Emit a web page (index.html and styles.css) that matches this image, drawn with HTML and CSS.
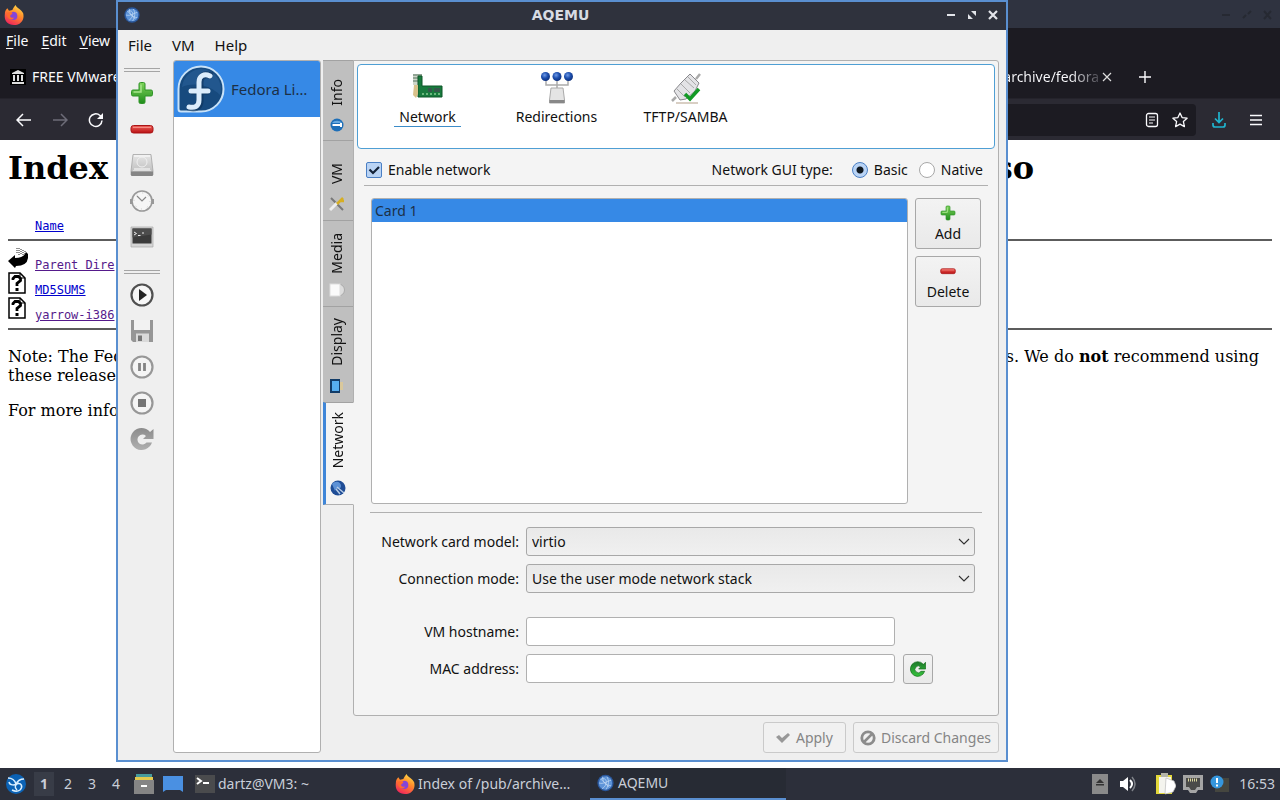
FILE: index.html
```html
<!DOCTYPE html>
<html lang="en">
<head>
<meta charset="utf-8">
<title>AQEMU</title>
<link rel="stylesheet" href="styles.css">
</head>
<body>
<svg class="defs" aria-hidden="true">
  <defs>
    <linearGradient id="green" x1="0" y1="0" x2="0" y2="1"><stop offset="0" stop-color="#7fd35a"/><stop offset="1" stop-color="#1f8d1c"/></linearGradient>
    <linearGradient id="leaf" x1="0" y1="0" x2="0" y2="1"><stop offset="0" stop-color="#1d7a2a"/><stop offset="1" stop-color="#35c33c"/></linearGradient>
    <linearGradient id="red" x1="0" y1="0" x2="0" y2="1"><stop offset="0" stop-color="#f0645c"/><stop offset="1" stop-color="#b90f12"/></linearGradient>
    <linearGradient id="grey" x1="0" y1="0" x2="0" y2="1"><stop offset="0" stop-color="#e6e6e6"/><stop offset="1" stop-color="#b8b8b8"/></linearGradient>
    <linearGradient id="dim" x1="0" y1="0" x2="0" y2="1"><stop offset="0" stop-color="#8c8c8c"/><stop offset="1" stop-color="#b0b0b0"/></linearGradient>
    <linearGradient id="fire" x1="0.8" y1="0" x2="0.3" y2="1"><stop offset="0" stop-color="#ffe14a"/><stop offset=".45" stop-color="#ff8a2a"/><stop offset="1" stop-color="#f0245c"/></linearGradient>
    <radialGradient id="ball" cx=".4" cy=".35" r=".7"><stop offset="0" stop-color="#6f9ae6"/><stop offset=".5" stop-color="#1d4fae"/><stop offset="1" stop-color="#0c2d78"/></radialGradient>
    <symbol id="i-plus" viewBox="0 0 24 24"><path d="M9 3q0-1.500 1.500-1.500h3q1.500 0 1.500 1.500V9h6q1.500 0 1.500 1.500v3q0 1.500-1.500 1.500h-6v6q0 1.500-1.500 1.500h-3Q9 22.500 9 21v-6H3q-1.500 0-1.500-1.500v-3Q1.500 9 3 9h6z" fill="url(#green)" stroke="#2f9427"/><path d="M11 3.500V11H3.500" fill="none" stroke="#a6e58c" stroke-width="1.500"/></symbol>
    <symbol id="i-minus" viewBox="0 0 24 24"><rect x="1" y="8.500" width="22" height="7.500" rx="2.500" fill="url(#red)" stroke="#a91517"/><path d="M3 10.500h18" stroke="#f48a83"/></symbol>
    <symbol id="i-disk" viewBox="0 0 24 24"><path d="M3 1.500h18l2 16.500v4H1v-4z" fill="url(#grey)" stroke="#a5a5a5" stroke-width=".8"/><path d="M1 18.500h22V22q0 1-1 1H2q-1 0-1-1z" fill="#858585"/><path d="M4 3h16M4 16h16" stroke="#fff"/><circle cx="12" cy="9" r="5" fill="none" stroke="#f0f0f0"/><path d="M3 17.500h18" stroke="#ddd"/></symbol>
    <symbol id="i-clock" viewBox="0 0 24 24"><path d="M1 10v5M23 10v5" stroke="#999" stroke-width="2"/><circle cx="12" cy="12" r="10" fill="#f6f6f6" stroke="#999" stroke-width="1.600"/><path d="M7 7l5 5 4-4" fill="none" stroke="#888" stroke-width="1.200"/><circle cx="12" cy="12" r="8" fill="none" stroke="#c6c6c6" stroke-dasharray="1 5.280"/></symbol>
    <symbol id="i-term" viewBox="0 0 24 24"><path d="M1 2h22v20H1z" fill="#d4d4d4" stroke="#aaa" stroke-width=".7"/><path d="M2.500 3.500h19v15h-19z" fill="#3b3b3b"/><path d="M2.500 3.500h19v6l-19 3z" fill="#4d4d4d"/><path d="M4 7l2.500 1.500L4 10M8 10.500h2.500M12 8h2" fill="none" stroke="#eee" stroke-width="1"/></symbol>
    <symbol id="i-play" viewBox="0 0 24 24"><circle cx="12" cy="12" r="10.500" fill="#f7f7f7" stroke="#505050" stroke-width="2.200"/><path d="M9 6l8 6-8 6z" fill="#222"/></symbol>
    <symbol id="i-save" viewBox="0 0 24 24"><path d="M1 1h22v22H3l-2-2z" fill="#969696"/><path d="M4 1h16v10H4z" fill="#f2f2f2"/><path d="M6 14.500h13V23H6z" fill="#dadada"/><path d="M8 16.500h4V22H8z" fill="#777"/></symbol>
    <symbol id="i-pause" viewBox="0 0 24 24"><circle cx="12" cy="12" r="10.500" fill="#f5f5f5" stroke="#979797" stroke-width="2.200"/><path d="M9.500 8v8M14.500 8v8" stroke="#858585" stroke-width="2.800"/></symbol>
    <symbol id="i-stop" viewBox="0 0 24 24"><circle cx="12" cy="12" r="10.500" fill="#f5f5f5" stroke="#979797" stroke-width="2.200"/><path d="M8 8h8v8H8z" fill="#757575"/></symbol>
    <symbol id="i-reload" viewBox="0 0 24 24"><path d="M20 5l3.500-3v10H13l3-3a5 5 0 1 0 .500 6.500H22A11 11 0 1 1 20 5z"/></symbol>
    <symbol id="i-aqemu" viewBox="0 0 24 24"><circle cx="12" cy="12" r="11.500" fill="#2a579b"/><circle cx="12" cy="12" r="9.500" fill="#5e94d8"/><path d="M5 7c5-3 9 0 8 5s-4 7-6 8M8 3c0 8 4 12 12 13M3 12c6 2 10-2 17-4M14 3c3 5 3 11-1 18M6 7l11 11" fill="none" stroke="#c5dcf5" stroke-width="1"/></symbol>
    <symbol id="i-firefox" viewBox="0 0 24 24"><path d="M14 0c1 4 7 5 9 10 2 8-3 14-11 14S0 19 1 11c0-3 1-5 3-7l2 3 4-1c1-2 2-4 4-6z" fill="url(#fire)"/><path d="M9 9c3-2 7 0 7 4s-2 5-5 5-5-2-4-5z" fill="#8445d8"/><path d="M3 9c2 0 3-1 6 0 2 1 1 2-1 3-2 2 1 4 4 3-1 4-9 3-9-6z" fill="#ff6a2c"/></symbol>
    <symbol id="i-unknown" viewBox="0 0 20 22"><path d="M1 1h11l5 5v15H1z" fill="#fff" stroke="#000" stroke-width="1.500"/><path d="M12 1v5h5" fill="none" stroke="#000"/><path d="M5 8V6.500l2-2h3.500l2 2v2L9 11.500V14M7.500 17.500h3" fill="none" stroke="#000" stroke-width="2.800"/></symbol>
  </defs>
</svg>

<div class="desktop">
  <section class="browser" aria-label="Firefox">
    <div class="browser-title">
      <svg width="20" height="20"><use href="#i-firefox"/></svg>
      <svg class="faded-controls" width="54" height="12" viewBox="0 0 54 12"><path d="M2 6h8M23 9l3-3M28 5l3-3M44 2l7 8M51 2l-7 8" fill="none" stroke="#262932" stroke-width="2"/></svg>
    </div>
    <nav class="browser-menu"><a href="#"><u>F</u>ile</a><a href="#"><u>E</u>dit</a><a href="#"><u>V</u>iew</a></nav>
    <div class="browser-tabs">
      <div class="tab-left">
        <svg width="16" height="16" viewBox="0 0 16 16"><path d="M0 0h16v16H0z" fill="#000"/><path d="M8 1l6 3v1H2V4zM3 6h2v6H3zM7 6h2v6H7zM11 6h2v6h-2zM2 13h12v2H2z" fill="#ddd"/></svg>
        <span>FREE VMware</span>
      </div>
      <div class="tab-right">
        <span class="fade-text">archive/fedora</span>
        <button aria-label="Close tab"><svg width="10" height="10" viewBox="0 0 10 10"><path d="M1 1l8 8M9 1l-8 8" stroke="#ddd" stroke-width="1.200"/></svg></button>
        <button aria-label="New tab" class="new-tab"><svg width="14" height="14" viewBox="0 0 14 14"><path d="M7 1v12M1 7h12" stroke="#fbfbfe" stroke-width="1.400"/></svg></button>
      </div>
    </div>
    <div class="browser-bar">
      <div class="nav-buttons">
        <button aria-label="Back"><svg width="16" height="16" viewBox="0 0 16 16"><path d="M15 8H1M7 2L1 8l6 6" fill="none" stroke="#fbfbfe" stroke-width="1.500"/></svg></button>
        <button aria-label="Forward"><svg width="16" height="16" viewBox="0 0 16 16"><path d="M1 8h14M9 2l6 6-6 6" fill="none" stroke="#6d6c78" stroke-width="1.500"/></svg></button>
        <button aria-label="Reload"><svg width="16" height="16" viewBox="0 0 16 16"><path d="M14 8.500A6.300 6.300 0 1 1 12 3.500l2 2" fill="none" stroke="#fbfbfe" stroke-width="1.500"/><path d="M15 1v6H9z" fill="#fbfbfe"/></svg></button>
      </div>
      <div class="url-box">
        <svg width="14" height="16" viewBox="0 0 14 16"><rect x="1.500" y="1.500" width="11" height="13" rx="2" fill="none" stroke="#fbfbfe" stroke-width="1.300"/><path d="M4 5h6M4 8h6M4 11h4" stroke="#fbfbfe" stroke-width="1.200"/></svg>
        <svg width="16" height="16" viewBox="0 0 16 16"><path d="M8 1l2.100 4.600 5 .6-3.700 3.400 1 5L8 12.100l-4.400 2.500 1-5L.9 6.200l5-.6z" fill="none" stroke="#fbfbfe" stroke-width="1.300" stroke-linejoin="round"/></svg>
      </div>
      <svg width="14" height="16" viewBox="0 0 14 16"><path d="M7 0v10M3 6.500l4 4 4-4M1 11v2q0 2 2 2h8q2 0 2-2v-2" fill="none" stroke="#1fb5cf" stroke-width="1.700"/></svg>
      <svg width="12" height="12" viewBox="0 0 12 12"><path d="M0 1.500h12M0 6h12M0 10.500h12" stroke="#fbfbfe" stroke-width="1.400"/></svg>
    </div>
    <main class="page">
      <h1><span>Index</span><span>so</span></h1>
      <div class="listing-head"><a href="#">Name</a></div>
      <hr>
      <div class="listing">
        <svg width="20" height="22" viewBox="0 0 20 22"><path d="M0 14l7-6v3q9 0 11-6l2 2v4q-1 8-12 8l-1 2z" fill="#000"/><path d="M9 1v6M11 1v7M13 2v6M15 3v5M17 4v4" stroke="#222" stroke-dasharray="1 1"/></svg><a class="seen" href="#">Parent Dire</a>
        <svg width="20" height="22"><use href="#i-unknown"/></svg><a href="#">MD5SUMS</a>
        <svg width="20" height="22"><use href="#i-unknown"/></svg><a class="seen" href="#">yarrow-i386</a>
      </div>
      <hr>
      <p><span>Note: The Fed</span><span>s. We do <b>not</b> recommend using</span></p>
      <p class="cont"><span>these release</span></p>
      <p class="more"><span>For more info</span></p>
    </main>
  </section>

  <section class="window" aria-label="AQEMU">
    <header class="titlebar">
      <svg width="16" height="16"><use href="#i-aqemu"/></svg>
      <h2>AQEMU</h2>
      <div class="win-controls">
        <button aria-label="Minimize"><svg width="10" height="10" viewBox="0 0 10 10"><path d="M1 5h8" stroke="#e3e5ea" stroke-width="2"/></svg></button>
        <button aria-label="Maximize"><svg width="10" height="10" viewBox="0 0 10 10"><path d="M4 1h5v5zM1 4v5h5z" fill="#e3e5ea"/></svg></button>
        <button aria-label="Close"><svg width="10" height="10" viewBox="0 0 10 10"><path d="M1 1l8 8M9 1L1 9" stroke="#e3e5ea" stroke-width="2.200"/></svg></button>
      </div>
    </header>
    <nav class="menubar"><button>File</button><button>VM</button><button>Help</button></nav>
    <div class="body">
      <div class="tools">
        <div class="grip"></div>
        <button aria-label="Add VM"><svg width="24" height="24"><use href="#i-plus"/></svg></button>
        <button aria-label="Delete VM"><svg width="24" height="24"><use href="#i-minus"/></svg></button>
        <button aria-label="Disk"><svg width="24" height="24"><use href="#i-disk"/></svg></button>
        <button aria-label="Snapshots"><svg width="24" height="24"><use href="#i-clock"/></svg></button>
        <button aria-label="Terminal"><svg width="24" height="24"><use href="#i-term"/></svg></button>
        <div class="grip second"></div>
        <button aria-label="Start"><svg width="24" height="24"><use href="#i-play"/></svg></button>
        <button aria-label="Save"><svg width="24" height="24"><use href="#i-save"/></svg></button>
        <button aria-label="Pause"><svg width="24" height="24"><use href="#i-pause"/></svg></button>
        <button aria-label="Stop"><svg width="24" height="24"><use href="#i-stop"/></svg></button>
        <button aria-label="Reset"><svg width="24" height="24" fill="url(#dim)"><use href="#i-reload"/></svg></button>
      </div>
      <div class="vm-list">
        <button class="vm">
          <svg width="48" height="48" viewBox="0 0 48 48"><path d="M24 1.500A22.500 22.500 0 1 1 24 46.500H4q-2.500 0-2.500-2.500V24A22.500 22.500 0 0 1 24 1.500z" fill="#174a7e" stroke="#c8e2f8" stroke-width="2"/><path d="M24 4a20 20 0 0 1 19 26c-8-8-23-14-38-8A20 20 0 0 1 24 4z" fill="#2c629b" opacity=".55"/><path d="M35 11c-7-3-12 0-12 6v19c0 7-6 8-12 6M14 26h18" fill="none" stroke="#0c2b50" stroke-width="7" opacity=".5"/><path d="M33 11c-6-3-11 0-11 6v18c0 7-5 8-10 7M14 26h17" fill="none" stroke="#dcedfc" stroke-width="5" stroke-linecap="round"/></svg>
          <span>Fedora Li…</span>
        </button>
      </div>
      <div class="work">
        <div class="side-tabs">
          <button class="t-info"><span>Info</span><svg width="14" height="14" viewBox="0 0 14 14"><circle cx="7" cy="7" r="6.500" fill="#1e6fb8"/><path d="M2 5a5.500 4 0 0 1 10 0z" fill="#67a9df"/><path d="M5 7h6M2.500 7h1.500M11 5v4M5 6v2" stroke="#fff" stroke-width="2"/></svg></button>
          <button class="t-vm"><span>VM</span><svg width="16" height="16" viewBox="0 0 16 16"><path d="M2 2l12 12" stroke="#787878" stroke-width="2"/><path d="M1 14l7-7" stroke="#eee" stroke-width="3"/><path d="M8 8l6-6M11 5h4" stroke="#d6ae22" stroke-width="2.500"/></svg></button>
          <button class="t-media"><span>Media</span><svg width="16" height="16" viewBox="0 0 16 16"><circle cx="9.500" cy="8" r="6" fill="#ddd" stroke="#aaa"/><rect x="1" y="2" width="10" height="12" fill="#fafafa" stroke="#ddd"/></svg></button>
          <button class="t-display"><span>Display</span><svg width="16" height="16" viewBox="0 0 16 16"><path d="M11 4h3v8h-3z" fill="#d9c89c"/><path d="M1 1h10v14H1z" fill="#123c68"/><path d="M3 3h7v10H3z" fill="#56aef0"/></svg></button>
          <button class="t-net active"><span>Network</span><svg width="16" height="16" viewBox="0 0 16 16"><circle cx="8" cy="8" r="7.500" fill="#1f4d96"/><path d="M2 4c4-4 9-2 9 2s-5 1-6 5" fill="#5c91d6"/><path d="M7 7l7 6M6 9l4 5" stroke="#b7cbe4" stroke-width="1.500"/></svg></button>
        </div>
        <div class="panel">
          <div class="sections">
            <button class="current"><svg width="32" height="32" viewBox="0 0 32 32"><path d="M1 2h9v11H1z" fill="#cfd6c9"/><path d="M1 3h9M1 6h9M1 9h9" stroke="#7d9482" stroke-width="1.500"/><path d="M6 4h4v10h20v11H6z" fill="#187a3d" stroke="#0c5728"/><path d="M2 13h4v9l-2 4-3-3z" fill="#d9c28b"/><path d="M10 22h18" stroke="#69b77c" stroke-dasharray="2 2" stroke-width="2"/><path d="M16 16h4v4h-4zM22 16h6v4h-6z" fill="#35574a"/></svg><span>Network</span></button>
            <button><svg width="32" height="32" viewBox="0 0 32 32"><path d="M5 6v7h22V6M16 6v11" fill="none" stroke="#aaa" stroke-width="1.500"/><g fill="url(#ball)"><circle cx="4.500" cy="4.500" r="4.500"/><circle cx="16" cy="4.500" r="4.500"/><circle cx="27.500" cy="4.500" r="4.500"/></g><path d="M10 16h12l1.500 12v3h-15v-3z" fill="#e4e4e4" stroke="#aaa"/><path d="M8.500 28h15v3h-15z" fill="#888"/></svg><span>Redirections</span></button>
            <button><svg width="32" height="32" viewBox="0 0 32 32"><path d="M6 31h22" stroke="#d9cfc4" stroke-width="2"/><path d="M2 29l4-4M26 7l4-5" stroke="#aaa" stroke-width="2.500"/><path d="M11 11L20 2l9 9-4 8-9 8-6 1-6-9z" fill="#e3e3e6" stroke="#88888c"/><path d="M11 12l9 9M15 8l9 8M18 5l8 8M7 17l8 8" stroke="#aaa"/><path d="M15 22l5 5 9-10" fill="none" stroke="#129a25" stroke-width="3.500"/></svg><span>TFTP/SAMBA</span></button>
          </div>
          <div class="options">
            <label><input type="checkbox" checked>Enable network</label>
            <span class="gui-type">Network GUI type:</span>
            <label><input type="radio" name="gui" checked>Basic</label>
            <label><input type="radio" name="gui">Native</label>
          </div>
          <div class="cards">
            <ul class="card-list"><li>Card 1</li></ul>
            <div class="card-actions">
              <button><svg width="16" height="16"><use href="#i-plus"/></svg>Add</button>
              <button><svg width="16" height="16"><use href="#i-minus"/></svg>Delete</button>
            </div>
          </div>
          <form class="settings">
            <label for="model">Network card model:</label>
            <select id="model"><option>virtio</option></select>
            <label for="mode">Connection mode:</label>
            <select id="mode"><option>Use the user mode network stack</option></select>
            <label for="host" class="spaced">VM hostname:</label>
            <input id="host" type="text" class="spaced">
            <label for="mac">MAC address:</label>
            <div class="mac"><input id="mac" type="text"><button type="button" aria-label="Generate MAC address"><svg width="16" height="16" fill="url(#leaf)" stroke="#126b18"><use href="#i-reload"/></svg></button></div>
          </form>
        </div>
        <footer class="actions">
          <button disabled><svg width="16" height="16" viewBox="0 0 16 16"><path d="M1 7l3-2 3 3 6-5 2 2-8 8z" fill="#989898"/></svg>Apply</button>
          <button disabled><svg width="16" height="16" viewBox="0 0 16 16"><circle cx="8" cy="8" r="6.200" fill="none" stroke="#8c8c8c" stroke-width="2.800"/><path d="M4 12l8-8" stroke="#8c8c8c" stroke-width="2.500"/></svg>Discard Changes</button>
        </footer>
      </div>
    </div>
  </section>

  <footer class="taskbar">
    <svg class="start" width="20" height="20" viewBox="0 0 20 20"><circle cx="10" cy="10" r="10" fill="#0b62b5"/><path d="M2 4c5 0 7 3 8 6 2-4 4-5 8-5M3 8c1 4 6 3 7 2M10 10c6-2 7 3 4 6-3 2-6 1-8 0M13 9c-4 1-5 4-2 7" fill="none" stroke="#d9efff" stroke-width="1.500"/></svg>
    <div class="pager"><button class="on">1</button><button>2</button><button>3</button><button>4</button></div>
    <svg width="20" height="20" viewBox="0 0 20 20"><path d="M2 0h16v3H2z" fill="#469b9c"/><path d="M1 3h18v4H1z" fill="#e3c94d"/><path d="M0 6h20v14H0z" fill="#858585"/><path d="M7 12h6" stroke="#fff" stroke-width="2"/></svg>
    <svg class="show" width="20" height="16" viewBox="0 0 20 16"><path d="M0 0h20v16l-3-2H3l-3 2z" fill="#4a90e2"/></svg>
    <button class="task"><svg width="20" height="20" viewBox="0 0 20 20"><path d="M0 1h20v18H0z" fill="#4a4b4d"/><path d="M2 4l4 3-4 3M8 9h6" fill="none" stroke="#fff" stroke-width="2"/></svg>dartz@VM3: ~</button>
    <button class="task"><svg width="20" height="20"><use href="#i-firefox"/></svg>Index of /pub/archive…</button>
    <button class="task open"><svg width="17" height="20"><use href="#i-aqemu"/></svg>AQEMU</button>
    <div class="tray">
      <svg width="16" height="20" viewBox="0 0 16 20"><path d="M0 0h16v20H0z" fill="#8a8a8a"/><path d="M4 9l4-4 4 4zM4 10h8v1.500H4z" fill="#333"/></svg>
      <svg class="speaker" width="16" height="16" viewBox="0 0 16 16"><path d="M0 5h3l5-4v14l-5-4H0z" fill="#fff"/><path d="M10 4q4 4 0 8" fill="none" stroke="#fff" stroke-width="2"/><path d="M12 1q6 7 0 14" fill="none" stroke="#7d8087" stroke-width="1.500"/></svg>
      <svg width="20" height="22" viewBox="0 0 20 22"><path d="M0 2h16v19H0z" fill="#e3d83a"/><path d="M3 4h12v16H3z" fill="#f4f4ee"/><path d="M5 0h7v4H5z" fill="#b5b5a8"/><path d="M10 5l8 3 2 5-3 6-8 2z" fill="#fff" stroke="#bbb" stroke-width=".7"/></svg>
      <svg width="20" height="18" viewBox="0 0 20 18"><path d="M0 0h20v15h-5l-2 3H7l-2-3H0z" fill="#a5a5a5"/><path d="M3 3h14v9h-3l-2 3H8l-2-3H3z" fill="#4a4a48"/><path d="M5 5h10" stroke="#ddd8a0" stroke-width="3" stroke-dasharray="1 1"/></svg>
      <svg width="20" height="18" viewBox="0 0 20 18"><path d="M9 3h10v14H5v-5z" fill="#45463f"/><circle cx="7" cy="7" r="6.500" fill="#3596dd"/><path d="M7 3v5M7 9.500v2" stroke="#fff" stroke-width="2"/></svg>
      <time>16:53</time>
    </div>
  </footer>
</div>
</body>
</html>
```
FILE: styles.css
```css
* { box-sizing: border-box; }
body { margin: 0; font: 14px/20px "Noto Sans", "Open Sans", sans-serif; color: #111; }
button { font: inherit; color: inherit; background: none; border: 0; padding: 0; }
svg { display: block; flex: none; }
.defs { position: absolute; width: 0; height: 0; }
a { color: inherit; text-decoration: none; }

.desktop { position: relative; min-height: 100vh; display: flex; flex-direction: column; overflow: hidden; background: #fff; }

/* Browser behind */
.browser { flex: 1; display: flex; flex-direction: column; }
.browser-title { height: 28px; padding: 2px 6px 0 4px; display: flex; align-items: center; justify-content: space-between; background: #2f3340; }
.browser-menu { height: 26px; padding: 0 6px; display: flex; gap: 13px; align-items: center; background: #1c1b22; color: #fbfbfe; }
.browser-menu u { text-underline-offset: 2px; }
.browser-tabs { height: 44px; padding-top: 2px; display: flex; align-items: center; justify-content: space-between; background: #1c1b22; color: #fbfbfe; }
.tab-left { display: flex; gap: 6px; align-items: center; padding-left: 10px; }
.tab-right { display: flex; align-items: center; padding-right: 128px; }
.tab-right button { margin-left: 3px; }
.tab-right .new-tab { margin-left: 26px; }
.fade-text { background: linear-gradient(90deg, #fbfbfe 70%, #45444c); background-clip: text; color: transparent; }
.browser-bar { height: 42px; padding-right: 18px; display: flex; align-items: center; background: #2b2a33; border-top: 1px solid #24232b; }
.nav-buttons { flex: 1; display: flex; gap: 20px; padding-left: 16px; }
.url-box { width: 220px; height: 32px; margin-right: 16px; padding-right: 8px; border-radius: 4px; display: flex; align-items: center; justify-content: flex-end; gap: 13px; background: #1c1b22; }
.browser-bar > svg:last-child { margin-left: 24px; }

.page { padding: 8px; font: 16px/19px "DejaVu Serif", serif; color: #000; }
.page h1 { margin: 0; padding-right: 238px; font-size: 32px; line-height: 40px; display: flex; justify-content: space-between; }
.page a { color: #00c; text-decoration: underline; }
.page a.seen { color: #551a8b; }
.listing-head, .listing { font: 12px/14px "DejaVu Sans Mono", monospace; }
.listing-head { margin-top: 31px; padding: 0 0 6px 27px; }
.page hr { margin: 0; border: 0; height: 2px; background: #5c5c5c; }
.listing { display: grid; grid-template-columns: 20px 1fr; column-gap: 7px; grid-auto-rows: 25px; align-items: end; padding: 6px 0; }
.listing svg { align-self: start; }
.page p { margin: 17px 0 0; padding-right: 13px; display: flex; justify-content: space-between; white-space: pre; }
.page p.cont { margin-top: 0; }
.page p.more { margin-top: 16px; }

/* Front window */
.window { position: absolute; top: 0; bottom: 38px; left: 116px; right: 272px; display: flex; flex-direction: column; border: 2px solid #5a8fd0; background: #efefef; }
.titlebar { height: 28px; padding: 0 8px 2px 6px; display: flex; align-items: center; background: #2f323d; color: #d7dbe3; }
.titlebar h2 { flex: 1; margin: 0 0 0 35px; text-align: center; font: bold 14px/20px "DejaVu Sans", sans-serif; }
.win-controls { display: flex; gap: 11px; }
.menubar { height: 30px; padding: 0 10px 1px; display: flex; gap: 20px; align-items: center; font-size: 15px; }
.body { flex: 1; min-height: 0; display: flex; padding: 0 7px 7px 0; }
.tools { width: 55px; display: flex; flex-direction: column; align-items: center; gap: 12px; padding: 8px 7px 0 0; }
.grip { width: 36px; height: 4px; border: solid #a5a5a5; border-width: 1px 0; }
.grip.second { margin-top: 9px; }
.tools .grip + button { margin-top: -3px; }
.vm-list { width: 148px; border: 1px solid #b0b0b0; border-radius: 3px; background: #fff; }
.vm { width: 100%; height: 56px; padding-left: 3px; display: flex; align-items: center; gap: 6px; background: #3689e6; color: #1c3046; border-radius: 2px 2px 0 0; font-size: 15px; }
.work { flex: 1; min-width: 0; display: grid; grid-template-columns: 31px 1fr; grid-template-rows: 1fr auto; padding-left: 2px; }
.side-tabs { display: flex; flex-direction: column; }
.side-tabs button { display: flex; flex-direction: column; align-items: center; justify-content: flex-end; gap: 12px; padding: 0 2px 8px 0; background: #bfbfbf; border: 1px solid #b0b0b0; border-width: 1px 1px 0 0; border-top-color: #a2a2a2; }
.side-tabs span { writing-mode: vertical-rl; transform: rotate(180deg); line-height: 20px; }
.t-info, .t-vm { height: 80px; }
.t-media { height: 86px; }
.side-tabs .t-media { gap: 8px; }
.t-display { height: 96px; }
.side-tabs .t-net { position: relative; z-index: 1; height: 103px; background: #f4f4f4; border-left: 3px solid #3f86d8; border-bottom: 1px solid #b0b0b0; border-right-color: #f4f4f4; padding-right: 4px; }
.panel { margin-left: -1px; padding: 3px; border: 1px solid #b0b0b0; border-radius: 0 3px 3px 3px; background: #f4f4f4; display: flex; flex-direction: column; }

.sections { height: 85px; padding: 7px 5px 5px; display: flex; border: 1px solid #4f9fd4; border-radius: 4px; background: #fff; }
.sections button { width: 129px; display: flex; flex-direction: column; align-items: center; gap: 3px; }
.sections span { line-height: 19px; padding: 0 5px; border-bottom: 1px solid transparent; }
.sections .current span { border-color: #3c8cc8; }
.options { margin: 0 7px; height: 37px; padding: 5px 5px 0 2px; display: flex; align-items: center; border-bottom: 1px solid #b0b0b0; }
.options label { display: flex; align-items: center; gap: 6px; }
.options label + label { margin-left: 11px; }
.gui-type { margin: 0 19px 0 auto; }
.options input { appearance: none; margin: 0; width: 16px; height: 16px; border: 1px solid #a8a8a8; background: #fff center no-repeat; }
.options input[type="checkbox"] { border-radius: 2px; border-color: #4a7fc4; background-color: #b9d3f4; background-image: url("data:image/svg+xml,%3Csvg xmlns='http://www.w3.org/2000/svg' width='12' height='12'%3E%3Cpath d='M1.500 5.500l3.500 3.500 6-6' fill='none' stroke='%23132238' stroke-width='2.200'/%3E%3C/svg%3E"); }
.options input[type="radio"] { border-radius: 50%; }
.options input[type="radio"]:checked { border-color: #4a7fc4; background: radial-gradient(circle, #101820 3px, #b9d3f4 4px); }

.cards { flex: 1; margin: 0 13px; padding: 12px 0 8px 1px; display: flex; gap: 7px; border-bottom: 1px solid #b0b0b0; }
.card-list { flex: 1; margin: 0; padding: 0; list-style: none; border: 1px solid #b0b0b0; border-radius: 3px; background: #fff; }
.card-list li { height: 23px; padding: 2px 3px 0; background: #3689e6; color: #1c3046; border-radius: 2px 2px 0 0; }
.card-actions { width: 66px; margin-right: 1px; display: flex; flex-direction: column; gap: 7px; }
.card-actions button { height: 51px; padding-top: 2px; display: flex; flex-direction: column; align-items: center; justify-content: center; gap: 3px; }
.card-actions button, .settings button, .settings select, .actions button { border: 1px solid #a8a8a8; border-radius: 3px; background: linear-gradient(#f3f3f3, #e9e9e9); }

.settings { margin: 14px 20px 28px 19px; display: grid; grid-template-columns: 143px 1fr; gap: 8px 7px; align-items: center; }
.settings label { text-align: right; white-space: nowrap; }
.settings input, .settings select { width: 100%; height: 29px; padding: 0 5px; font: inherit; color: #111; }
.settings input { width: 369px; max-width: 100%; border: 1px solid #b0b0b0; border-radius: 3px; background: #fff; }
.settings select { appearance: none; background: url("data:image/svg+xml,%3Csvg xmlns='http://www.w3.org/2000/svg' width='12' height='8'%3E%3Cpath d='M1 1l5 5 5-5' fill='none' stroke='%23333' stroke-width='1.100'/%3E%3C/svg%3E") right 4px center no-repeat, linear-gradient(#e9e9e9, #f0f0f0); }
.settings .spaced { margin-top: 16px; }
.mac { display: flex; gap: 8px; }
.settings button { width: 30px; height: 30px; display: grid; place-items: center; }
.actions { grid-column: 1 / -1; display: flex; justify-content: flex-end; gap: 7px; padding-top: 6px; }
.actions button { min-width: 83px; height: 31px; padding: 0 7px 0 6px; display: flex; align-items: center; justify-content: center; gap: 5px; color: #858585; border-color: #cacaca; background: #f1f1f1; }

/* Taskbar */
.taskbar { height: 32px; padding: 0 5px 0 6px; display: flex; align-items: center; background: #2c2f3a; color: #c9ced8; }
.pager { display: flex; gap: 4px; margin: 0 8px; }
.pager button { width: 20px; height: 24px; }
.pager .on { background: #383c47; font-weight: bold; }
.show { margin: 0 12px 0 9px; }
.task { width: 200px; height: 32px; display: flex; align-items: center; gap: 3px; }
.task.open { width: 196px; margin-left: -5px; padding-left: 7px; border-bottom: 2px solid #5a8fd0; gap: 4px; background: #272b34; }
.tray { margin-left: auto; display: flex; align-items: center; gap: 7px; }
.speaker { margin: 0 13px 0 5px; }
.tray time { margin-left: 2px; }
```
